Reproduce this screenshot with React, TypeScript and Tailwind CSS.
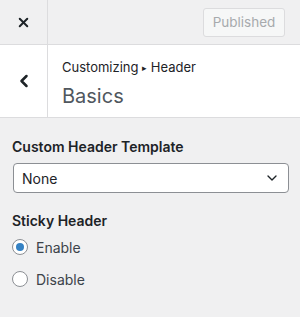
import { X, ChevronLeft, ChevronDown } from 'lucide-react'

const App = () => {
  return (
    <div
      className="w-[300px] h-[317px] bg-[#f0f0f1] text-[#1d2327] overflow-hidden"
      style={{ fontFamily: 'Inter, "Liberation Sans", sans-serif' }}
    >
      {/* top bar */}
      <div className="flex h-[45px] bg-[#f0f0f1] border-b border-[#dcdcde]">
        <div className="w-[48px] flex items-center justify-center border-r border-[#dcdcde]">
          <X size={15} strokeWidth={3.2} className="text-[#1d2327]" />
        </div>
        <div className="flex-1 flex items-center justify-end pr-[15px]">
          <button className="h-[29px] w-[82px] rounded-[3px] border border-[#dcdcde] bg-[#f6f7f7] text-[#a7aaad] text-[13.5px]">
            Published
          </button>
        </div>
      </div>

      {/* section header */}
      <div className="flex h-[73px] bg-white border-b border-[#dcdcde]">
        <div className="w-[48px] flex items-center justify-center border-r border-[#dcdcde]">
          <ChevronLeft size={20} strokeWidth={3} className="text-[#1d2327]" />
        </div>
        <div className="flex-1 flex flex-col pl-[14px] pt-[13px]">
          <div className="text-[13px] leading-[18px] text-[#1d2327]">
            Customizing <span className="text-[9px] align-[1px]">▸</span> Header
          </div>
          <div className="mt-[5px] text-[20px] leading-[28px] text-[#50575e]">Basics</div>
        </div>
      </div>

      {/* controls */}
      <div className="px-[12px] pt-[19px]">
        <div className="text-[14px] font-semibold leading-[20px]">Custom Header Template</div>
        <div className="mt-[6px] mr-[-1px] ml-[1px] h-[30px] bg-white border border-[#8c8f94] rounded-[4px] flex items-center justify-between pl-[8px] pr-[8px]">
          <span className="text-[14px]">None</span>
          <ChevronDown size={16} strokeWidth={2} className="text-[#1d2327]" />
        </div>

        <div className="mt-[18px] text-[14px] font-semibold leading-[20px]">Sticky Header</div>
        <div className="mt-[8px] flex flex-col gap-[16px]">
          <label className="flex items-center gap-[8px] h-[16px]">
            <span className="w-[16px] h-[16px] rounded-full border border-[#8c8f94] bg-white flex items-center justify-center">
              <span className="w-[8px] h-[8px] rounded-full bg-[#3582c4]" />
            </span>
            <span className="text-[14px] text-[#3c434a]">Enable</span>
          </label>
          <label className="flex items-center gap-[8px] h-[16px]">
            <span className="w-[16px] h-[16px] rounded-full border border-[#8c8f94] bg-white" />
            <span className="text-[14px] text-[#3c434a]">Disable</span>
          </label>
        </div>
      </div>
    </div>
  )
}

export default App
